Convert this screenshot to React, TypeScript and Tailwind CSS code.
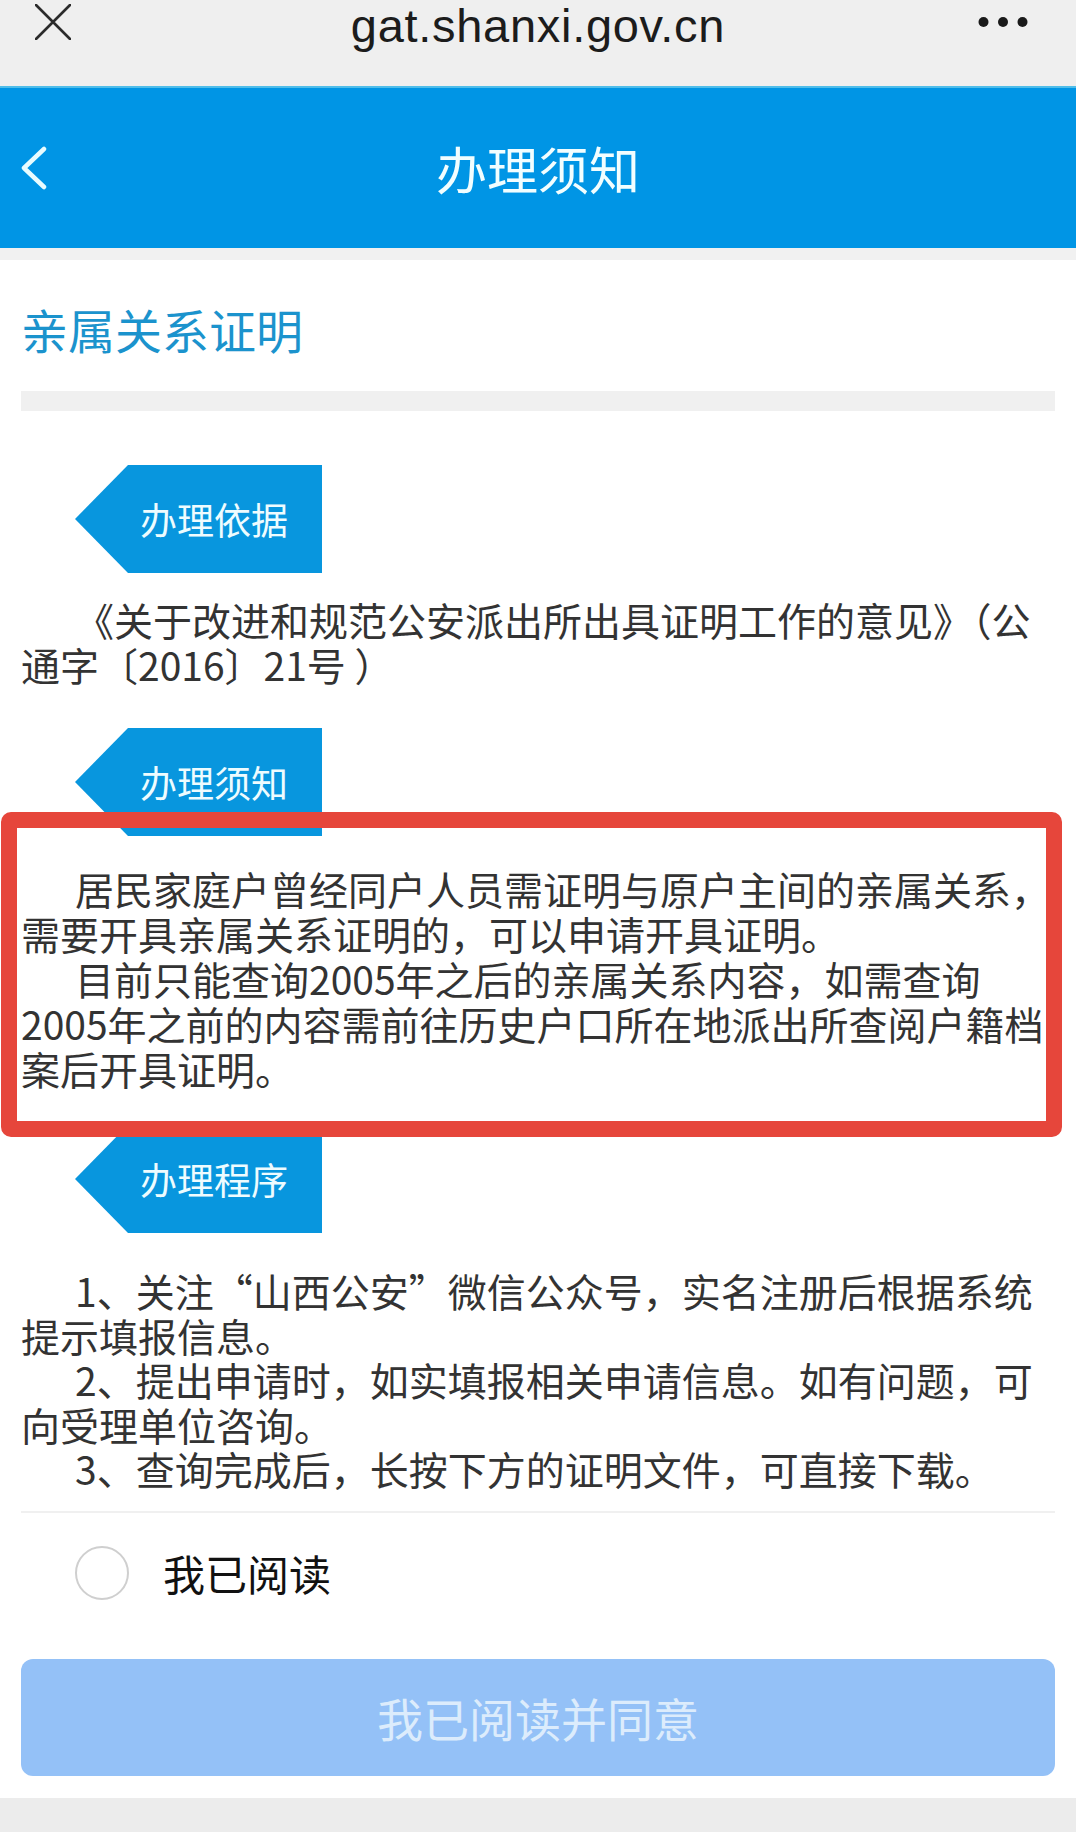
import React from "react";

const cjk = "font-['Noto_Sans_CJK_SC',sans-serif]";

function SectionTag({ label, className }: { label: string; className?: string }) {
  return (
    <div
      className={`ml-[54px] flex h-[108px] w-[247px] items-center bg-[#0896de] pl-[65px] [clip-path:polygon(0_50%,53px_0,100%_0,100%_100%,53px_100%)] ${className ?? ""}`}
    >
      <span className="text-[37px] leading-none text-[#eefcff]">{label}</span>
    </div>
  );
}

type Line = { text: React.ReactNode; indent?: boolean };

function Paragraph({ lines, className, leading }: { lines: Line[]; className?: string; leading?: string }) {
  return (
    <div className={`text-[39px] text-[#333] ${leading ?? "leading-[45px]"} ${className ?? ""}`}>
      {lines.map((line, i) => (
        <div key={i} className={`whitespace-nowrap ${line.indent ? "pl-[54px]" : ""}`}>
          {line.text}
        </div>
      ))}
    </div>
  );
}

// full-width quote / bracket glyphs, as the phone font draws them
function Fw({ children }: { children: React.ReactNode }) {
  return <span className="[font-feature-settings:'fwid']">{children}</span>;
}

export default function App() {
  return (
    <div className={`relative min-h-[1832px] w-[1076px] bg-white ${cjk}`}>
      {/* browser bar */}
      <div className="h-[86px] bg-[#efefef]">
        <div className="grid h-[52px] grid-cols-[1fr_auto_1fr] items-start">
          <svg width="36" height="36" viewBox="0 0 36 36" className="ml-[35px] mt-[4px]">
            <path d="M1 1 L35 35 M35 1 L1 35" stroke="#2b2b2b" strokeWidth="2.6" strokeLinecap="round" />
          </svg>
          <span className="font-['Liberation_Sans',sans-serif] text-[47px] leading-[52px] tracking-[0.015em] text-[#1c1c1c]">
            gat.shanxi.gov.cn
          </span>
          <svg width="50" height="12" viewBox="0 0 50 12" className="mr-[48px] mt-[16px] justify-self-end">
            <circle cx="5.5" cy="6" r="5" fill="#1a1a1a" />
            <circle cx="25" cy="6" r="5" fill="#1a1a1a" />
            <circle cx="44.5" cy="6" r="5" fill="#1a1a1a" />
          </svg>
        </div>
      </div>

      {/* page header */}
      <div className="grid h-[162px] grid-cols-[1fr_auto_1fr] items-center border-t-2 border-[#4fbde9] bg-[#0095e5]">
        <svg width="28" height="44" viewBox="0 0 28 44" className="ml-[20px]">
          <path d="M24 3 L4 22 L24 41" fill="none" stroke="#e8fcff" strokeWidth="4.5" strokeLinecap="round" strokeLinejoin="round" />
        </svg>
        <span className="text-[51px] leading-none text-[#f2feff]">办理须知</span>
        <span />
      </div>
      <div className="h-[12px] bg-[#f1f1f1]" />

      <div className="px-[21px]">
        <h1 className="pt-[45px] text-[47px] font-normal leading-[47px] text-[#1b93cd]">亲属关系证明</h1>
        <div className="mt-[39px] h-[20px] bg-[#f0f0f0]" />

        <SectionTag label="办理依据" className="mt-[54px]" />
        <Paragraph
          className="mt-[24px]"
          lines={[
            { text: "《关于改进和规范公安派出所出具证明工作的意见》（公", indent: true },
            { text: "通字〔2016〕21号 ）" },
          ]}
        />

        <SectionTag label="办理须知" className="mt-[41px]" />
        <Paragraph
          className="mt-[30px]"
          lines={[
            { text: "居民家庭户曾经同户人员需证明与原户主间的亲属关系，", indent: true },
            { text: "需要开具亲属关系证明的，可以申请开具证明。" },
            { text: "目前只能查询2005年之后的亲属关系内容，如需查询", indent: true },
            { text: "2005年之前的内容需前往历史户口所在地派出所查阅户籍档" },
            { text: "案后开具证明。" },
          ]}
        />

        <SectionTag label="办理程序" className="mt-[34px]" />
        <Paragraph
          className="mt-[35px]"
          leading="leading-[44.5px]"
          lines={[
            {
              text: (
                <>
                  1、关注<Fw>“</Fw>山西公安<Fw>”</Fw>微信公众号，实名注册后根据系统
                </>
              ),
              indent: true,
            },
            { text: "提示填报信息。" },
            { text: "2、提出申请时，如实填报相关申请信息。如有问题，可", indent: true },
            { text: "向受理单位咨询。" },
            { text: "3、查询完成后，长按下方的证明文件，可直接下载。", indent: true },
          ]}
        />

        <div className="mt-[20px] h-[2px] bg-[#f0f0f0]" />

        <label className="flex h-[120px] items-center">
          <span className="ml-[54px] h-[54px] w-[54px] rounded-full border-[2.5px] border-[#cfcfcf]" />
          <span className="ml-[34px] text-[42px] leading-none text-[#111]">我已阅读</span>
        </label>

        <button
          type="button"
          disabled
          className="mt-[26px] flex h-[117px] w-full items-center justify-center rounded-[12px] bg-[#94c1f7] text-[46px] leading-none text-[#dcecfc]"
        >
          我已阅读并同意
        </button>
      </div>

      <div className="mt-[22px] h-[34px] bg-[#ececec]" />

      {/* red highlight annotation */}
      <div className="absolute left-[1px] top-[812px] h-[325px] w-[1061px] rounded-[10px] border-[16px] border-[#e6463b]" />
    </div>
  );
}
